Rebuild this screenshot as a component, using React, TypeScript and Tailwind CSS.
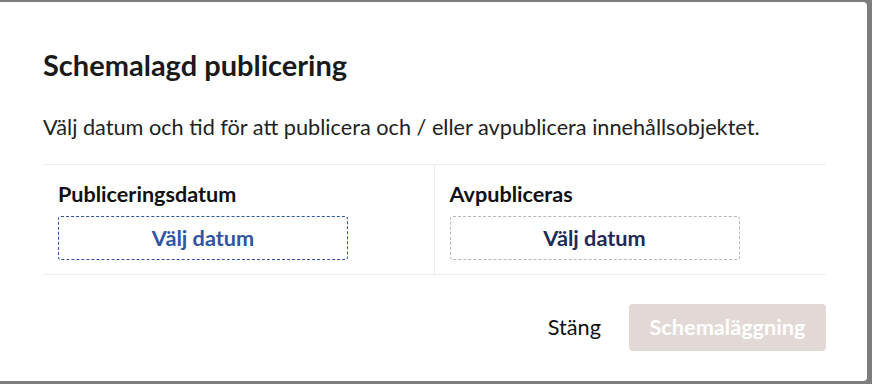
export default function App() {
  return (
    <div className="w-[872px] h-[384px] bg-[#7d7d7d] pt-[2px] pr-[5px] pb-[3px] font-['Lato','Liberation_Sans',sans-serif]">
      <div className="h-full bg-white rounded-r-[4px] flex flex-col pl-[43px] pr-[41px] pt-[45px]">
        <h2 className="text-[29px] font-bold text-[#1a1a1a] leading-[36px]">Schemalagd publicering</h2>
        <p className="mt-[30px] text-[21.7px] text-[#222] leading-[28px] whitespace-nowrap">
          Välj datum och tid för att publicera och / eller avpublicera innehållsobjektet.
        </p>

        {/* Date columns */}
        <div className="mt-[23px] grid grid-cols-2 border-y border-[#ececec]">
          <div className="px-[15px] pt-[16px] pb-[14px] border-r border-[#ececec]">
            <div className="text-[21.6px] font-bold text-[#111] leading-[26px]">Publiceringsdatum</div>
            <button
              type="button"
              className="mt-[9px] w-[290px] h-[44px] border border-dashed border-[#2f55a4] rounded-[3px] text-[21.7px] font-bold text-[#2f55a4]"
            >
              Välj datum
            </button>
          </div>
          <div className="px-[15px] pt-[16px] pb-[14px]">
            <div className="text-[21.6px] font-bold text-[#111] leading-[26px]">Avpubliceras</div>
            <button
              type="button"
              className="mt-[9px] w-[290px] h-[44px] border border-dashed border-[#b8b8b8] rounded-[3px] text-[21.7px] font-bold text-[#1e2a57]"
            >
              Välj datum
            </button>
          </div>
        </div>

        {/* Footer */}
        <div className="mt-[29px] flex justify-end items-center gap-[28px]">
          <button type="button" className="text-[21.7px] text-[#111]">Stäng</button>
          <button
            type="button"
            disabled
            className="w-[197px] h-[47px] rounded-[4px] bg-[#e2d9d6] text-[21.7px] font-bold text-white"
          >
            Schemaläggning
          </button>
        </div>
      </div>
    </div>
  );
}
